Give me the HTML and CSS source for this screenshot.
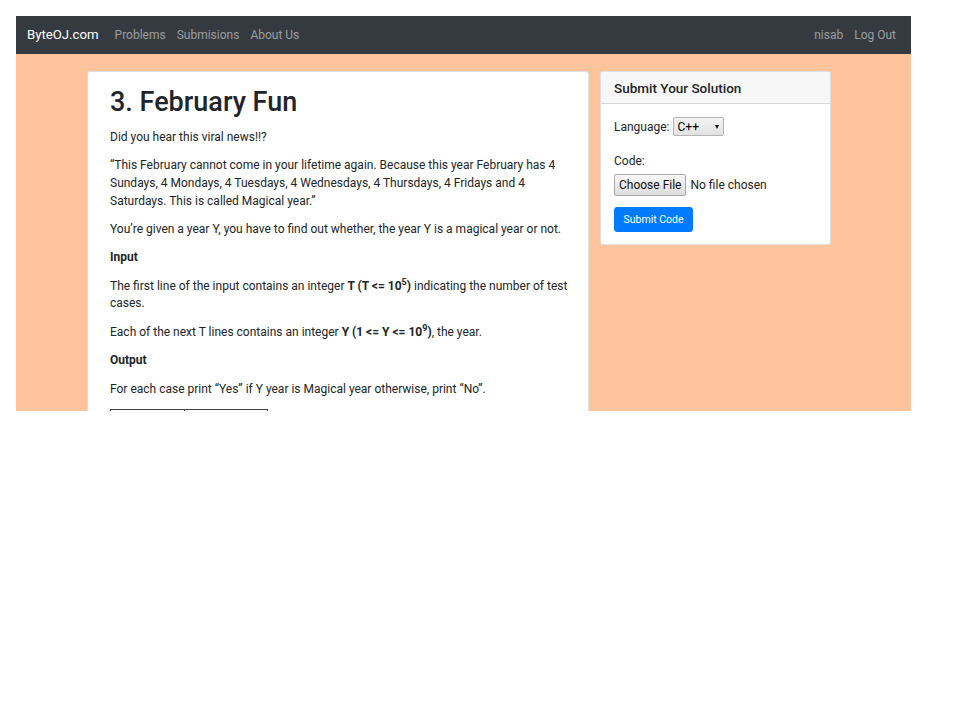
FILE: index.html
```html
<!DOCTYPE html>
<html lang="en">
<head>
<meta charset="utf-8">
<title>3. February Fun - ByteOJ</title>
<link rel="stylesheet" href="styles.css">
</head>
<body>
<div class="viewport">
  <nav class="navbar">
    <a class="brand" href="#">ByteOJ.com</a>
    <ul class="nav-links">
      <li><a href="#">Problems</a></li>
      <li><a href="#">Submisions</a></li>
      <li><a href="#">About Us</a></li>
    </ul>
    <ul class="nav-links nav-right">
      <li><a href="#">nisab</a></li>
      <li><a href="#">Log Out</a></li>
    </ul>
  </nav>
  <main class="main">
    <article class="card problem">
      <h1 class="problem-title">3. February Fun</h1>
      <p>Did you hear this viral news!!?</p>
      <p>“This February cannot come in your lifetime again. Because this year February has 4 Sundays, 4 Mondays, 4 Tuesdays, 4 Wednesdays, 4 Thursdays, 4 Fridays and 4 Saturdays. This is called Magical year.”</p>
      <p>You’re given a year Y, you have to find out whether, the year Y is a magical year or not.</p>
      <p class="section-label">Input</p>
      <p>The first line of the input contains an integer <b>T (T &lt;= 10<sup>5</sup>)</b> indicating the number of test cases.</p>
      <p>Each of the next T lines contains an integer <b>Y (1 &lt;= Y &lt;= 10<sup>9</sup>)</b>, the year.</p>
      <p class="section-label">Output</p>
      <p>For each case print “Yes” if Y year is Magical year otherwise, print “No”.</p>
      <table class="sample">
        <tr><th class="col-in">Sample Input</th><th class="col-out">Sample Output</th></tr>
        <tr><td>2<br>2015<br>2016</td><td>Yes<br>No</td></tr>
      </table>
    </article>
    <aside class="card submit">
      <div class="card-header">Submit Your Solution</div>
      <form class="card-body">
        <div class="field-row">
          <label class="field-label" for="lang">Language:</label>
          <span class="select-wrap"><select id="lang" class="select"><option>C++</option><option>C</option><option>Java</option></select></span>
        </div>
        <label class="field-label code-label" for="code">Code:</label>
        <input id="code" class="file" type="file">
        <button type="button" class="btn">Submit Code</button>
      </form>
    </aside>
  </main>
</div>
</body>
</html>
```

FILE: styles.css
```css
body {
  margin: 0;
  background: #fff;
  font-family: Roboto, "Liberation Sans", sans-serif;
  color: #212529;
}

.viewport {
  margin: 16px;
  width: 895px;
  height: 395px;
  overflow: hidden;
  background: #ffc49b;
}

/* navbar */
.navbar {
  height: 38px;
  background: #343a40;
  display: flex;
  align-items: center;
  padding: 0 9.5px 0 11px;
  box-sizing: border-box;
}

.brand {
  color: #fff;
  font-size: 13.2px;
  line-height: 20px;
  margin-right: 10.5px;
  text-decoration: none;
}

.nav-links {
  list-style: none;
  margin: 0;
  padding: 0;
  display: flex;
}

.nav-links a {
  display: block;
  padding: 0 5.5px;
  color: rgba(255, 255, 255, 0.5);
  font-size: 12px;
  line-height: 18px;
  text-decoration: none;
}

.nav-right {
  margin-left: auto;
}

/* layout */
.main {
  display: flex;
  align-items: flex-start;
  gap: 11px;
  padding: 17px 0 0 71px;
}

.card {
  background: #fff;
  border: 1px solid rgba(0, 0, 0, 0.125);
  border-radius: 3px;
  box-sizing: border-box;
}

/* problem */
.problem {
  width: 502px;
  padding: 14px 19px 20px 22px;
}

.problem-title {
  font-size: 27px;
  font-weight: 500;
  line-height: 1.2;
  margin: 0 0 10.7px;
}

.problem p {
  font-size: 12px;
  line-height: 17.6px;
  margin: 0 0 10.8px;
}

.problem b {
  font-weight: 700;
}

.problem sup {
  font-size: 75%;
  line-height: 0;
  position: relative;
  vertical-align: baseline;
  top: -0.5em;
}

.section-label {
  font-weight: 700;
}

.sample {
  border-collapse: collapse;
  font-size: 12px;
  margin-top: 0.5px;
}

.sample th,
.sample td {
  border: 1px solid #444;
  padding: 4px 6px;
  text-align: left;
  vertical-align: top;
}

.col-in {
  width: 61px;
}

.col-out {
  width: 70px;
}

/* submit card */
.submit {
  width: 231px;
}

.card-header {
  height: 32px;
  box-sizing: border-box;
  display: flex;
  align-items: center;
  padding: 0 13px;
  background: #f7f7f7;
  border-bottom: 1px solid rgba(0, 0, 0, 0.125);
  border-radius: 3px 3px 0 0;
  font-size: 13.5px;
  font-weight: 500;
}

.card-body {
  display: flex;
  flex-direction: column;
  align-items: flex-start;
  padding: 13px 13px 12px;
  margin: 0;
}

.field-row {
  display: flex;
  align-items: center;
  gap: 3px;
  height: 19px;
}

.field-label {
  font-size: 12px;
  line-height: 18px;
}

.select-wrap {
  position: relative;
  display: block;
}

.select {
  appearance: none;
  -webkit-appearance: none;
  display: block;
  width: 51px;
  height: 19px;
  margin: 0;
  padding: 0 0 0 4px;
  border: 1px solid #b4b4b4;
  border-radius: 2px;
  background: linear-gradient(#f4f4f4, #e2e2e2);
  font-family: Roboto, "Liberation Sans", sans-serif;
  font-size: 12px;
  color: #000;
}

.select-wrap::after {
  content: "";
  position: absolute;
  right: 5px;
  top: 7.5px;
  border-left: 2.5px solid transparent;
  border-right: 2.5px solid transparent;
  border-top: 4px solid #111;
  pointer-events: none;
}

.code-label {
  margin-top: 16px;
}

.file {
  margin-top: 4px;
  height: 22px;
  font-family: Roboto, "Liberation Sans", sans-serif;
  font-size: 12px;
  color: #222;
}

.file::file-selector-button {
  height: 22px;
  margin: 0 4px 0 0;
  padding: 0 4px;
  border: 1px solid #a9a9a9;
  border-radius: 2px;
  background: linear-gradient(#f8f8f8, #dcdcdc);
  font-family: Roboto, "Liberation Sans", sans-serif;
  font-size: 12px;
  color: #111;
}

.btn {
  margin-top: 11px;
  height: 25px;
  padding: 0 8.5px;
  border: 1px solid #007bff;
  border-radius: 3px;
  background: #007bff;
  color: #fff;
  font-family: Roboto, "Liberation Sans", sans-serif;
  font-size: 10.5px;
}
```
